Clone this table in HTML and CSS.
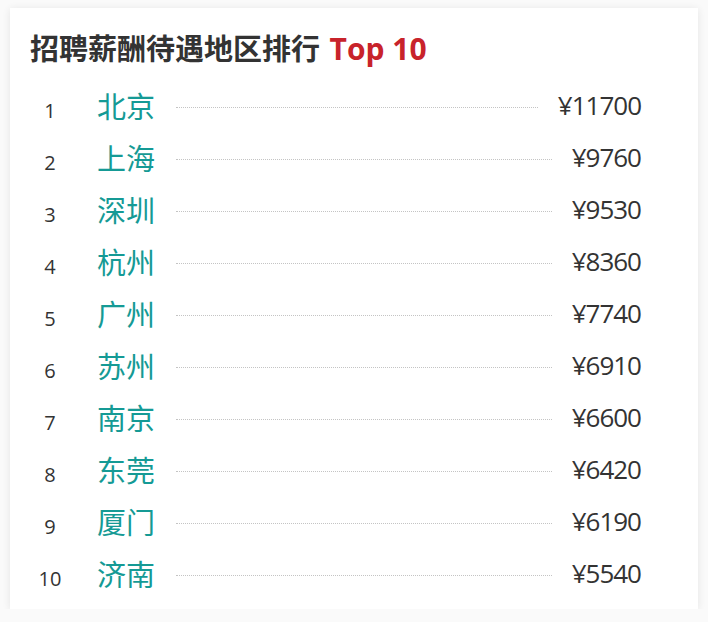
FILE: index.html
```html
<!DOCTYPE html>
<html lang="zh-CN">
<head>
<meta charset="utf-8">
<title>招聘薪酬待遇地区排行 Top 10</title>
<link rel="stylesheet" href="styles.css">
</head>
<body>
<div class="card">
  <h1 class="title">招聘薪酬待遇地区排行 <span class="hl">Top 10</span></h1>
  <ol class="list">
    <li class="row"><span class="rank">1</span><span class="city">北京</span><span class="dots"></span><span class="val">¥11700</span></li>
    <li class="row"><span class="rank">2</span><span class="city">上海</span><span class="dots"></span><span class="val">¥9760</span></li>
    <li class="row"><span class="rank">3</span><span class="city">深圳</span><span class="dots"></span><span class="val">¥9530</span></li>
    <li class="row"><span class="rank">4</span><span class="city">杭州</span><span class="dots"></span><span class="val">¥8360</span></li>
    <li class="row"><span class="rank">5</span><span class="city">广州</span><span class="dots"></span><span class="val">¥7740</span></li>
    <li class="row"><span class="rank">6</span><span class="city">苏州</span><span class="dots"></span><span class="val">¥6910</span></li>
    <li class="row"><span class="rank">7</span><span class="city">南京</span><span class="dots"></span><span class="val">¥6600</span></li>
    <li class="row"><span class="rank">8</span><span class="city">东莞</span><span class="dots"></span><span class="val">¥6420</span></li>
    <li class="row"><span class="rank">9</span><span class="city">厦门</span><span class="dots"></span><span class="val">¥6190</span></li>
    <li class="row"><span class="rank">10</span><span class="city">济南</span><span class="dots"></span><span class="val">¥5540</span></li>
  </ol>
</div>
</body>
</html>
```

FILE: styles.css
```css
* { box-sizing: border-box; }
html, body { margin: 0; padding: 0; }
body {
  background: #fafafa;
  font-family: "Open Sans", "Noto Sans CJK SC", sans-serif;
  color: #333;
  padding: 8px 10px 0 10px;
}
.card {
  background: #fff;
  width: 688px;
  height: 601px;
  box-shadow: 0 1px 8px rgba(0, 0, 0, 0.09);
  padding: 21px 57px 0 20px;
}
.title {
  margin: 0;
  font-size: 29px;
  line-height: 40px;
  font-weight: 700;
  color: #333;
}
.hl {
  color: #c8232b;
  font-size: 30px;
  margin-left: 2px;
}
.list {
  list-style: none;
  margin: 10px 0 0 0;
  padding: 0;
}
.row {
  display: flex;
  align-items: center;
  height: 52px;
}
.rank {
  width: 40px;
  text-align: center;
  font-size: 20px;
  line-height: 24px;
  margin-top: 11px;
  color: #333;
}
.city {
  margin-left: 27px;
  font-size: 29px;
  line-height: 32px;
  color: #159a95;
  font-family: "Noto Sans CJK SC", sans-serif;
}
.dots {
  flex: 1;
  height: 0;
  border-top: 1px dotted #c4c4c4;
  margin: 5px 20px 0 21px;
}
.val {
  font-size: 26px;
  line-height: 32px;
  letter-spacing: -1px;
  color: #333;
}
```
